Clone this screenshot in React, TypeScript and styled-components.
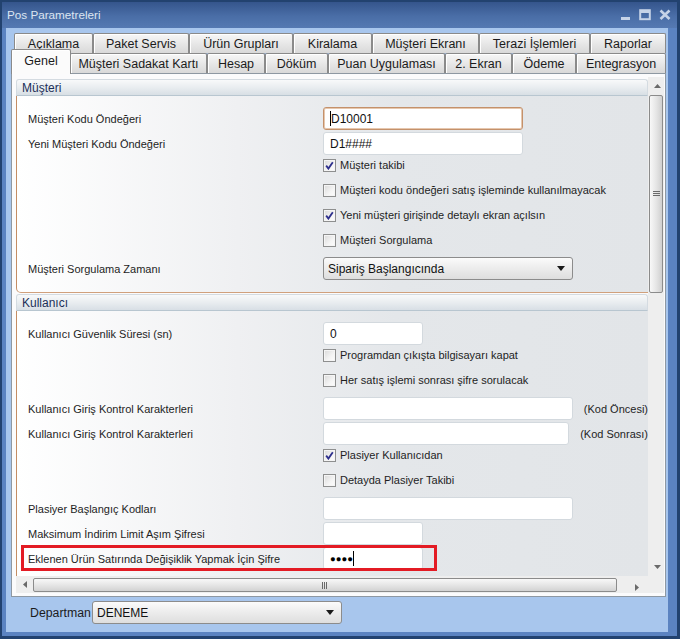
import React from "react";
import styled, { createGlobalStyle } from "styled-components";

const GlobalStyle = createGlobalStyle`
  *, *::before, *::after {
    box-sizing: border-box;
  }
  body {
    margin: 0;
    font-family: "Liberation Sans", Arial, sans-serif;
    background: #ffffff;
  }
`;

const Window = styled.div`
  width: 680px;
  height: 639px;
  display: flex;
  flex-direction: column;
  background: #5b83c1;
  border: 2px solid #22426f;
  border-bottom-width: 3px;
  border-right-width: 3px;
  padding: 0 9px 4px 4px;
`;

const TitleBar = styled.div`
  flex: none;
  height: 26px;
  margin: 0 -9px 0 -4px;
  padding: 0 6px 1px 5px;
  display: flex;
  align-items: center;
  justify-content: space-between;
  background: linear-gradient(#35558c, #4a6ea7 55%, #5579b2);
  color: #dce5f1;
  font-size: 11.7px;
`;

const TitleButtons = styled.div`
  display: flex;
  align-items: center;
  gap: 8px;
`;

const Client = styled.div`
  flex: 1;
  display: flex;
  flex-direction: column;
  background: #a8c6ed;
  padding: 5px 2px 0 5px;
`;

const TabRow = styled.div`
  flex: none;
  display: flex;
  align-items: flex-end;
  height: 20px;
  padding-left: 3px;
`;

const Tab = styled.div<{ $w: number; $selected?: boolean }>`
  width: ${(p) => p.$w}px;
  height: ${(p) => (p.$selected ? 25 : 20)}px;
  display: flex;
  align-items: center;
  justify-content: center;
  font-size: 12.5px;
  color: #1b1b1b;
  border: 1px solid #8a8a8a;
  border-bottom: none;
  border-radius: 2px 2px 0 0;
  box-shadow: inset 1px 1px 0 #ffffff;
  background: ${(p) =>
    p.$selected ? "#fbfbfb" : "linear-gradient(#f7f7f7, #e6e6e6 55%, #d9d9d9)"};
  white-space: nowrap;
  ${(p) =>
    p.$selected &&
    `
    margin: 0 -1px -1px -3px;
    padding-bottom: 3px;
    position: relative;
    z-index: 1;
  `}
`;

const Panel = styled.div`
  flex: none;
  height: 524px;
  border: 1px solid #8e98a2;
  background: #fbfbfc;
  padding: 3px 1px 3px 4px;
  display: grid;
  grid-template-columns: 1fr 16px;
  grid-template-rows: 1fr 17px;
`;

const Viewport = styled.div`
  overflow: hidden;
  min-height: 0;
  padding-top: 2px;
`;

const Group = styled.div`
  & + & {
    margin-top: 1px;
  }
`;

const GroupHeader = styled.div`
  height: 17px;
  display: flex;
  align-items: center;
  padding-left: 5px;
  font-size: 12px;
  color: #1c2f58;
  background: linear-gradient(#f8f9fa, #e9edf0 50%, #d8dfe5);
  border: 1px solid #d4dbe1;
  border-bottom-color: #b8c6d0;
  border-radius: 3px 3px 0 0;
`;

const GroupBody = styled.div`
  padding: 11px 0 10px 11px;
  border-left: 1px solid #c48d64;
  border-bottom: 1px solid #d0a07c;
  border-bottom-left-radius: 5px;
  background: linear-gradient(to right, #ffffff 0%, #eff0f2 35%, #e4e7ea 60%, #e2e5e8 100%);
`;

const Row = styled.div<{ $highlight?: boolean }>`
  display: flex;
  align-items: center;
  height: 23px;
  margin-bottom: 2px;
  position: relative;
  ${(p) =>
    p.$highlight &&
    `
    &::after {
      content: "";
      position: absolute;
      left: -7px;
      top: -2px;
      width: 416px;
      height: 26px;
      border: 3px solid #e31b24;
    }
  `}
`;

const CheckRow = styled.div`
  display: flex;
  align-items: center;
  height: 16px;
  margin-bottom: 9px;
  padding-left: 295px;
`;

const Label = styled.div`
  width: 295px;
  flex: none;
  font-size: 11px;
  color: #1e1e1e;
  white-space: nowrap;
`;

const SideLabel = styled.div`
  margin-left: 11px;
  font-size: 11px;
  color: #1e1e1e;
  white-space: nowrap;
`;

const TextBox = styled.div<{ $w: number; $focused?: boolean }>`
  width: ${(p) => p.$w}px;
  height: 23px;
  display: flex;
  align-items: center;
  padding-left: 6px;
  background: #ffffff;
  border: 1px solid ${(p) => (p.$focused ? "#c4916b" : "#d3d9de")};
  box-shadow: ${(p) => (p.$focused ? "inset 0 0 0 1px #e6c7ae" : "none")};
  border-radius: 3px;
  font-size: 12px;
  color: #111;
`;

const Caret = styled.span`
  display: inline-block;
  width: 1px;
  height: 15px;
  background: #000;
`;

const Dots = styled.span`
  font-size: 9.5px;
  color: #000;
`;

const Combo = styled.div<{ $w: number }>`
  width: ${(p) => p.$w}px;
  height: 23px;
  display: flex;
  align-items: center;
  justify-content: space-between;
  padding: 0 7px 0 4px;
  background: linear-gradient(#fbfbfb, #ececec 50%, #dedede);
  border: 1px solid #8c8c8c;
  border-radius: 3px;
  font-size: 12px;
  color: #111;
`;

const BoxMark = styled.span`
  width: 13px;
  height: 13px;
  flex: none;
  display: flex;
  align-items: center;
  justify-content: center;
  border: 1px solid #8e8f8f;
  background: linear-gradient(135deg, #d9d9d9, #f4f4f4 60%, #fdfdfd);
  box-shadow: inset 0 0 0 1px #f5f5f5;
`;

const CheckText = styled.span`
  margin-left: 4px;
  font-size: 11px;
  color: #1e1e1e;
  white-space: nowrap;
`;

const VScroll = styled.div`
  display: flex;
  flex-direction: column;
  min-height: 0;
  background: #eeeeee;
`;

const HScroll = styled.div`
  display: flex;
  align-items: stretch;
  background: #eeeeee;
`;

const ArrowButton = styled.div<{ $size: number }>`
  flex: none;
  width: ${(p) => p.$size}px;
  min-height: ${(p) => p.$size}px;
  display: flex;
  align-items: center;
  justify-content: center;
`;

const VThumb = styled.div`
  flex: none;
  height: 198px;
  margin: 0 1px;
  border: 1px solid #8b8b8b;
  border-radius: 2px;
  background: linear-gradient(to right, #f8f8f8, #e6e6e6 50%, #cfcfcf);
  display: flex;
  align-items: center;
  justify-content: center;
`;

const HThumb = styled.div`
  flex: none;
  width: 584px;
  margin: 2px 0 1px;
  border: 1px solid #8b8b8b;
  border-radius: 2px;
  background: linear-gradient(#f8f8f8, #e6e6e6 50%, #d2d2d2);
  display: flex;
  align-items: center;
  justify-content: center;
`;

const Spacer = styled.div`
  flex: 1;
`;

const Corner = styled.div`
  background: #eeeeee;
`;

const BottomBar = styled.div`
  flex: none;
  height: 35px;
  display: flex;
  align-items: flex-start;
  padding: 4px 0 0 19px;
`;

const BottomLabel = styled.div`
  width: 62px;
  height: 23px;
  display: flex;
  align-items: center;
  font-size: 12.3px;
  color: #1b1b1b;
`;

const Check: React.FC<{ checked?: boolean; text: string }> = ({ checked, text }) => (
  <CheckRow>
    <BoxMark>
      {checked && (
        <svg width="9" height="9" viewBox="0 0 9 9">
          <path d="M1.2 4.6 L3.4 7.6 L7.8 1.2" fill="none" stroke="#2d2f8c" strokeWidth="1.8" />
        </svg>
      )}
    </BoxMark>
    <CheckText>{text}</CheckText>
  </CheckRow>
);

const Arrow: React.FC<{ dir: "up" | "down" | "left" | "right" }> = ({ dir }) => {
  const pts = {
    up: "0,4 7,4 3.5,0",
    down: "0,0 7,0 3.5,4",
    left: "4,0 4,7 0,3.5",
    right: "0,0 0,7 4,3.5",
  }[dir];
  const vertical = dir === "up" || dir === "down";
  return (
    <svg width={vertical ? 7 : 4} height={vertical ? 4 : 7}>
      <polygon points={pts} fill="#6a6a6a" />
    </svg>
  );
};

const DropArrow = () => (
  <svg width="8" height="5">
    <polygon points="0,0 8,0 4,5" fill="#1a1a1a" />
  </svg>
);

const topTabs: [string, number][] = [
  ["Açıklama", 79],
  ["Paket Servis", 96],
  ["Ürün Grupları", 104],
  ["Kiralama", 79],
  ["Müşteri Ekranı", 107],
  ["Terazi İşlemleri", 111],
  ["Raporlar", 76],
];

const bottomTabs: [string, number][] = [
  ["Genel", 56],
  ["Müşteri Sadakat Kartı", 137],
  ["Hesap", 58],
  ["Döküm", 63],
  ["Puan Uygulaması", 117],
  ["2. Ekran", 67],
  ["Ödeme", 64],
  ["Entegrasyon", 90],
];

const App: React.FC = () => (
  <>
    <GlobalStyle />
    <Window>
      <TitleBar>
        <span>Pos Parametreleri</span>
        <TitleButtons>
          <svg width="11" height="12" viewBox="0 0 11 12">
            <rect x="1" y="8" width="9" height="3" fill="#c6d3e7" />
          </svg>
          <svg width="12" height="12" viewBox="0 0 12 12">
            <rect x="1.2" y="1.2" width="9.6" height="9" fill="none" stroke="#c6d3e7" strokeWidth="2" />
            <rect x="1" y="1" width="10" height="3" fill="#c6d3e7" />
          </svg>
          <svg width="12" height="12" viewBox="0 0 12 12">
            <path d="M1.5 1.5 L10.5 10 M10.5 1.5 L1.5 10" stroke="#c6d3e7" strokeWidth="2.6" />
          </svg>
        </TitleButtons>
      </TitleBar>
      <Client>
        <TabRow>
          {topTabs.map(([t, w]) => (
            <Tab key={t} $w={w}>
              {t}
            </Tab>
          ))}
        </TabRow>
        <TabRow>
          {bottomTabs.map(([t, w], i) => (
            <Tab key={t} $w={i === 0 ? w + 4 : w} $selected={i === 0}>
              {t}
            </Tab>
          ))}
        </TabRow>
        <Panel>
          <Viewport>
            <Group>
              <GroupHeader>Müşteri</GroupHeader>
              <GroupBody>
                <Row>
                  <Label>Müşteri Kodu Öndeğeri</Label>
                  <TextBox $w={200} $focused>
                    <Caret />
                    D10001
                  </TextBox>
                </Row>
                <Row>
                  <Label>Yeni Müşteri Kodu Öndeğeri</Label>
                  <TextBox $w={200}>D1####</TextBox>
                </Row>
                <Check checked text="Müşteri takibi" />
                <Check text="Müşteri kodu öndeğeri satış işleminde kullanılmayacak" />
                <Check checked text="Yeni müşteri girişinde detaylı ekran açılsın" />
                <Check text="Müşteri Sorgulama" />
                <Row>
                  <Label>Müşteri Sorgulama Zamanı</Label>
                  <Combo $w={250}>
                    Sipariş Başlangıcında
                    <DropArrow />
                  </Combo>
                </Row>
              </GroupBody>
            </Group>
            <Group>
              <GroupHeader>Kullanıcı</GroupHeader>
              <GroupBody>
                <Row>
                  <Label>Kullanıcı Güvenlik Süresi (sn)</Label>
                  <TextBox $w={100}>0</TextBox>
                </Row>
                <Check text="Programdan çıkışta bilgisayarı kapat" />
                <Check text="Her satış işlemi sonrası şifre sorulacak" />
                <Row>
                  <Label>Kullanıcı Giriş Kontrol Karakterleri</Label>
                  <TextBox $w={250} />
                  <SideLabel>(Kod Öncesi)</SideLabel>
                </Row>
                <Row>
                  <Label>Kullanıcı Giriş Kontrol Karakterleri</Label>
                  <TextBox $w={250} />
                  <SideLabel>(Kod Sonrası)</SideLabel>
                </Row>
                <Check checked text="Plasiyer Kullanıcıdan" />
                <Check text="Detayda Plasiyer Takibi" />
                <Row>
                  <Label>Plasiyer Başlangıç Kodları</Label>
                  <TextBox $w={250} />
                </Row>
                <Row>
                  <Label>Maksimum İndirim Limit Aşım Şifresi</Label>
                  <TextBox $w={100} />
                </Row>
                <Row $highlight>
                  <Label>Eklenen Ürün Satırında Değişiklik Yapmak İçin Şifre</Label>
                  <TextBox $w={100}>
                    <Dots>●●●●</Dots>
                    <Caret />
                  </TextBox>
                </Row>
              </GroupBody>
            </Group>
          </Viewport>
          <VScroll>
            <ArrowButton $size={18}>
              <Arrow dir="up" />
            </ArrowButton>
            <VThumb>
              <svg width="7" height="6">
                <path d="M0 0.5 H7 M0 2.5 H7 M0 4.5 H7" stroke="#6a6a6a" strokeWidth="1" />
              </svg>
            </VThumb>
            <Spacer />
            <ArrowButton $size={18}>
              <Arrow dir="down" />
            </ArrowButton>
          </VScroll>
          <HScroll>
            <ArrowButton $size={17}>
              <Arrow dir="left" />
            </ArrowButton>
            <HThumb>
              <svg width="6" height="7">
                <path d="M0.5 0 V7 M2.5 0 V7 M4.5 0 V7" stroke="#6a6a6a" strokeWidth="1" />
              </svg>
            </HThumb>
            <Spacer />
            <ArrowButton $size={22}>
              <Arrow dir="right" />
            </ArrowButton>
          </HScroll>
          <Corner />
        </Panel>
        <BottomBar>
          <BottomLabel>Departman</BottomLabel>
          <Combo $w={250}>
            DENEME
            <DropArrow />
          </Combo>
        </BottomBar>
      </Client>
    </Window>
  </>
);

export default App;
